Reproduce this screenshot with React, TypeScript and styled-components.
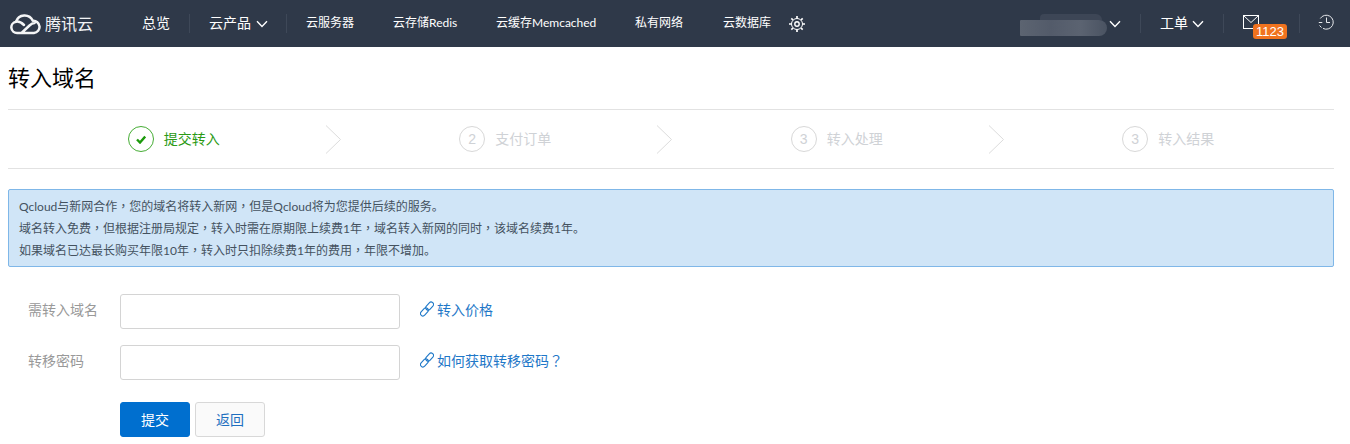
import React from "react";
import styled, { createGlobalStyle } from "styled-components";

const Global = createGlobalStyle`
  html, body { margin: 0; padding: 0; background: #fff; height: 444px; overflow: hidden; }
  body { font-family: "Noto Sans CJK SC", "Liberation Sans", sans-serif; font-size: 12px; }
  * { box-sizing: border-box; }
`;

const Page = styled.div`
  width: 1350px;
  height: 444px;
  overflow: hidden;
`;

const TopBar = styled.header`
  height: 47px;
  background: #2f3949;
  display: flex;
  align-items: center;
  color: #fff;
`;

const Brand = styled.div`
  display: flex;
  align-items: center;
  width: 142px;
  padding-left: 10px;
  gap: 4px;
  font-size: 16px;
  color: #f2f3f5;
`;

const BrandName = styled.span`
  padding-bottom: 2px;
`;

const NavItem = styled.span<{ $w: number; $big?: boolean }>`
  display: block;
  width: ${(p) => p.$w}px;
  padding-bottom: 4px;
  font-family: "Lato", "Noto Sans CJK SC", sans-serif;
  font-size: ${(p) => (p.$big ? 14 : 12)}px;
  color: #fff;
  white-space: nowrap;
`;

const Sep = styled.i<{ $l: number; $r: number }>`
  display: block;
  width: 1px;
  height: 19px;
  margin: 0 ${(p) => p.$r}px 0 ${(p) => p.$l}px;
  background: #3e4858;
`;

const Spacer = styled.div`
  flex: 1;
`;

const Chevron = styled.svg`
  display: block;
  width: 12px;
  height: 8px;
  fill: none;
  stroke: #fff;
  stroke-width: 1.4;
`;

const Masked = styled.div`
  position: relative;
  width: 87px;
  height: 16px;
  margin-top: 9px;
  margin-right: 2px;
  border-radius: 1px 8px 8px 1px;
  background: linear-gradient(90deg, #5c6471 0%, #535b6a 35%, #5b6371 70%, #4a5362 100%);
  filter: blur(0.5px);

  &::before {
    content: "";
    position: absolute;
    left: 20px;
    right: 5px;
    top: -6px;
    height: 6px;
    border-radius: 4px 6px 0 0;
    background: #3d4656;
  }
`;

const MailBox = styled.div`
  position: relative;
  width: 44px;
  height: 20px;
  margin-right: 12px;
`;

const MailIcon = styled.svg`
  display: block;
  width: 16px;
  height: 16px;
  fill: none;
  stroke: #fff;
  stroke-width: 1;
`;

const Badge = styled.span`
  position: absolute;
  left: 10px;
  top: 10px;
  width: 34px;
  height: 15px;
  border-radius: 3px;
  background: #f0731f;
  color: #fff;
  font-size: 13px;
  line-height: 15px;
  text-align: center;
  font-family: "Liberation Sans", sans-serif;
`;

const ClockIcon = styled.svg`
  display: block;
  width: 16px;
  height: 16px;
  margin: 0 16px 3px 0;
  fill: none;
  stroke: #e6e8eb;
  stroke-width: 1;
`;

const GearIcon = styled.svg`
  display: block;
  width: 16px;
  height: 16px;
  fill: none;
  stroke: #fff;
`;

const Content = styled.main`
  padding: 0 16px 0 8px;
`;

const Title = styled.h1`
  margin: 0;
  height: 62px;
  padding-bottom: 4px;
  display: flex;
  align-items: center;
  font-size: 22px;
  font-weight: 400;
  color: #000;
`;

const Steps = styled.ol`
  list-style: none;
  margin: 0;
  padding: 0;
  height: 60px;
  display: grid;
  grid-template-columns: repeat(4, 1fr);
  border-top: 1px solid #e2e2e2;
  border-bottom: 1px solid #e2e2e2;
`;

const Step = styled.li<{ $done?: boolean }>`
  position: relative;
  display: flex;
  align-items: center;
  justify-content: center;
  gap: 10px;
  font-size: 14px;
  color: ${(p) => (p.$done ? "#2a9a14" : "#cfd2d6")};
`;

const StepName = styled.span`
  padding-bottom: 2px;
`;

const Circle = styled.span<{ $done?: boolean }>`
  width: 26px;
  height: 26px;
  border-radius: 50%;
  border: 1px solid ${(p) => (p.$done ? "#46ad35" : "#d8d8d8")};
  display: flex;
  align-items: center;
  justify-content: center;
  font-size: 14px;
  font-family: "Liberation Sans", sans-serif;
  color: #cfd2d6;
`;

const CheckIcon = styled.svg`
  width: 10px;
  height: 9px;
  fill: none;
  stroke: #1c9a0c;
  stroke-width: 2.4;
`;

const Arrow = styled.svg`
  position: absolute;
  right: -2px;
  top: 15px;
  width: 17px;
  height: 29px;
  fill: none;
  stroke: #dcdcdc;
  stroke-width: 1;
`;

const Notice = styled.div`
  margin-top: 20px;
  height: 78px;
  padding: 6px 10px 4px;
  background: #d0e5f7;
  border: 1px solid #7fb7e8;
  border-radius: 2px;
  font-family: "Lato", "Noto Sans CJK SC", sans-serif;
  font-size: 12px;
  line-height: 22px;
  color: #44525f;
`;

const NoticeLine = styled.div`
  height: 22px;
  white-space: nowrap;
`;

const Punct = styled.span`
  font-family: "Noto Sans CJK TC", sans-serif;
  line-height: 1;
`;

const Form = styled.form`
  margin-top: 27px;
  display: flex;
  flex-direction: column;
  gap: 16px;
  padding-left: 20px;
`;

const Row = styled.div`
  display: flex;
  align-items: center;
  height: 35px;
`;

const Label = styled.label`
  width: 92px;
  padding-bottom: 6px;
  font-size: 14px;
  color: #999;
`;

const Input = styled.input`
  width: 280px;
  height: 35px;
  padding: 0 8px;
  background: #fff;
  border: 1px solid #d4d4d4;
  border-radius: 3px;
  outline: none;
`;

const HelpLink = styled.a`
  display: flex;
  align-items: center;
  margin-left: 20px;
  padding-bottom: 6px;
  gap: 3px;
  font-size: 14px;
  color: #1f78c8;
  text-decoration: none;
`;

const LinkIcon = styled.svg`
  width: 14px;
  height: 16px;
  fill: none;
  stroke: #1f78c8;
  stroke-width: 1.1;
`;

const Actions = styled.div`
  display: flex;
  gap: 5px;
  margin-top: 6px;
  padding-left: 92px;
`;

const Btn = styled.button<{ $primary?: boolean }>`
  width: 70px;
  height: 35px;
  padding: 0 0 2px;
  font: inherit;
  font-size: 14px;
  border-radius: 3px;
  border: 1px solid ${(p) => (p.$primary ? "#006fcf" : "#d8d8d8")};
  background: ${(p) => (p.$primary ? "#006fcf" : "#fafafa")};
  color: ${(p) => (p.$primary ? "#fff" : "#1f6fc0")};
`;

const Chev = () => (
  <Chevron viewBox="0 0 12 8"><path d="M1 1.2 6 6.4 11 1.2" /></Chevron>
);

const Link = () => (
  <LinkIcon viewBox="0 0 14 16">
    <g transform="rotate(42 7 8)">
      <rect x="4.600" y="-0.500" width="4.800" height="9.200" rx="2.400" />
      <rect x="4.600" y="7.300" width="4.800" height="9.200" rx="2.400" />
    </g>
  </LinkIcon>
);

const C = () => <Punct>，</Punct>;

const steps = ["提交转入", "支付订单", "转入处理", "转入结果"];
const marks = ["", "2", "3", "3"];

export default function App() {
  return (
    <Page>
      <Global />
      <TopBar>
        <Brand>
          <svg width="31" height="22" viewBox="0 0 31 22" fill="none" stroke="#f4f5f6" strokeWidth="2.500" strokeLinecap="round" strokeLinejoin="round">
            <path d="M12 20H7.200A5.700 5.700 0 0 1 6 8.700 9 9 0 0 1 22.800 7.800 6.100 6.100 0 0 1 24 20H11.500L19.500 12.500C21.500 10.600 23 10 24.500 10" />
            <path d="M6 8.700C9 8.200 11.500 9.600 14 12" />
          </svg>
          <BrandName>腾讯云</BrandName>
        </Brand>
        <NavItem $w={47} $big>总览</NavItem>
        <Sep $l={0} $r={19} />
        <NavItem $w={47} $big>云产品</NavItem>
        <Chev />
        <Sep $l={18} $r={19} />
        <NavItem $w={87}>云服务器</NavItem>
        <NavItem $w={103}>云存储Redis</NavItem>
        <NavItem $w={139}>云缓存Memcached</NavItem>
        <NavItem $w={88}>私有网络</NavItem>
        <NavItem $w={66}>云数据库</NavItem>
        <GearIcon viewBox="0 0 16 16">
          <circle cx="8" cy="8" r="5.500" strokeWidth="1" />
          <circle cx="8" cy="8" r="2.200" strokeWidth="1.400" />
          <path d="M8 0v2.500M8 13.500V16M0 8h2.500M13.500 8H16M2.300 2.300 4 4M12 12l1.700 1.700M13.700 2.300 12 4M4 12l-1.700 1.700" strokeWidth="1.700" />
        </GearIcon>
        <Spacer />
        <Masked />
        <Chev />
        <Sep $l={19} $r={19} />
        <NavItem $w={32} $big>工单</NavItem>
        <Chev />
        <Sep $l={19} $r={19} />
        <MailBox>
          <MailIcon viewBox="0 0 16 16">
            <rect x=".5" y="1.500" width="15" height="13" />
            <path d="M.5 1.500 8 8.500 15.500 1.500" />
          </MailIcon>
          <Badge>1123</Badge>
        </MailBox>
        <Sep $l={0} $r={18} />
        <ClockIcon viewBox="0 0 16 16">
          <path d="M2.300 4.500A7 7 0 1 1 5 14.400" />
          <path d="M8.500 3.500v5H12" />
          <path d="M.8 8.500h3.500M1.500 11.500l2 2" />
        </ClockIcon>
      </TopBar>
      <Content>
        <Title>转入域名</Title>
        <Steps>
          {steps.map((s, i) => (
            <Step key={s} $done={i === 0}>
              <Circle $done={i === 0}>
                {i === 0 ? (
                  <CheckIcon viewBox="0 0 10 9"><path d="M1 4.500 4 7.500 9.200 1.500" /></CheckIcon>
                ) : marks[i]}
              </Circle>
              <StepName>{s}</StepName>
              {i < 3 && (
                <Arrow viewBox="0 0 17 29"><path d="M1 .5 15.500 14.500 1 28.500" /></Arrow>
              )}
            </Step>
          ))}
        </Steps>
        <Notice>
          <NoticeLine>Qcloud与新网合作<C />您的域名将转入新网<C />但是Qcloud将为您提供后续的服务。</NoticeLine>
          <NoticeLine>域名转入免费<C />但根据注册局规定<C />转入时需在原期限上续费1年<C />域名转入新网的同时<C />该域名续费1年。</NoticeLine>
          <NoticeLine>如果域名已达最长购买年限10年<C />转入时只扣除续费1年的费用<C />年限不增加。</NoticeLine>
        </Notice>
        <Form>
          <Row>
            <Label>需转入域名</Label>
            <Input />
            <HelpLink href="#"><Link /><span>转入价格</span></HelpLink>
          </Row>
          <Row>
            <Label>转移密码</Label>
            <Input />
            <HelpLink href="#"><Link /><span>如何获取转移密码<Punct>？</Punct></span></HelpLink>
          </Row>
          <Actions>
            <Btn type="button" $primary>提交</Btn>
            <Btn type="button">返回</Btn>
          </Actions>
        </Form>
      </Content>
    </Page>
  );
}
